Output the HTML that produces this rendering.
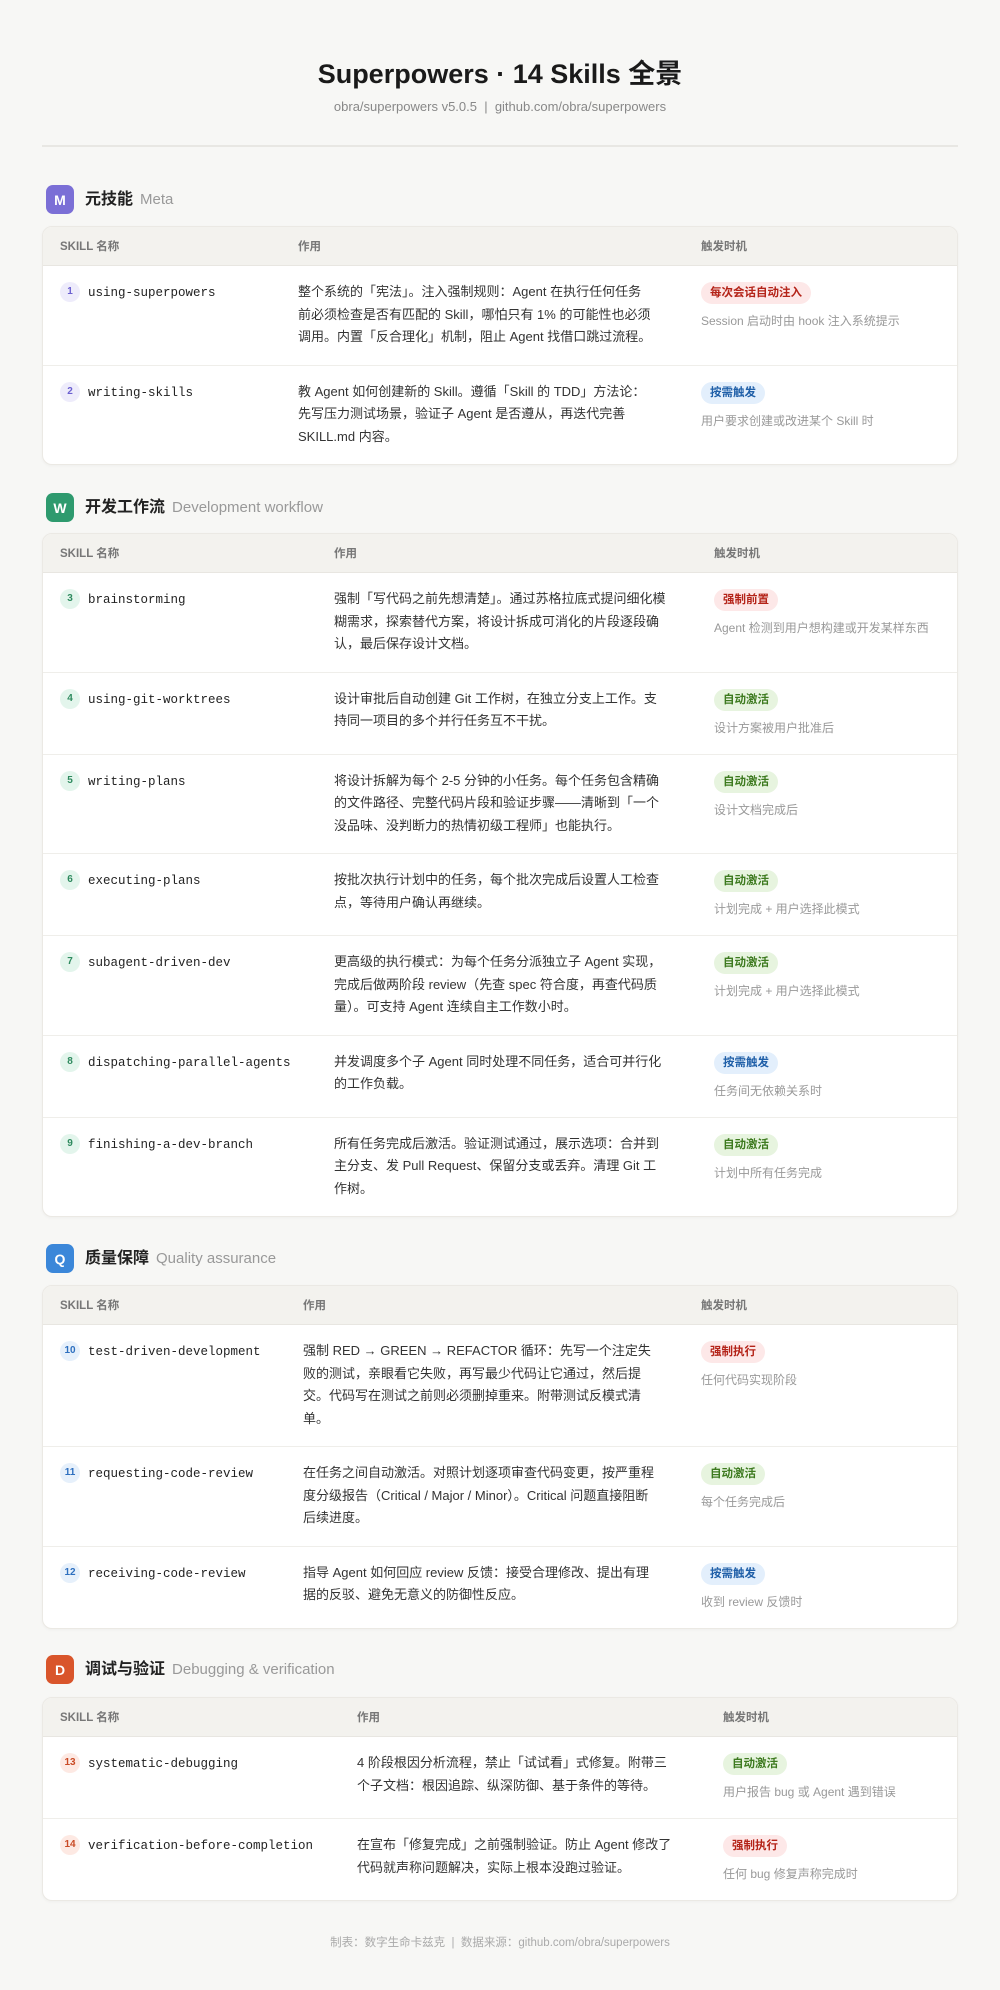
<!DOCTYPE html>
<html><head><meta charset="utf-8"><style>
*{box-sizing:border-box;margin:0;padding:0}
body{width:1000px;height:1990px;background:#f7f7f5;font-family:"Liberation Sans","Noto Sans CJK SC",sans-serif;color:#333;position:relative;overflow:hidden}
h1{position:absolute;top:52px;left:0;width:1000px;text-align:center;font-size:27px;font-weight:700;color:#1a1a1a}
.sub{position:absolute;top:99px;left:0;width:1000px;text-align:center;font-size:13px;color:#888}
.hr{position:absolute;top:145px;left:42px;width:916px;height:2px;background:#e8e7e3}
.sec{position:absolute;left:46px;height:29px;display:flex;align-items:center}
.bd{width:28px;height:29px;border-radius:7px;color:#fff;font-size:14px;font-weight:700;display:flex;align-items:center;justify-content:center}
.st{display:block;height:29px;line-height:29px;font-size:16px;font-weight:700;color:#222;margin-left:11px}
.se{display:block;height:29px;line-height:29px;font-size:15px;color:#999;margin-left:7px}
table{position:absolute;left:42px;width:916px;border-collapse:separate;border-spacing:0;background:#fff;border:1px solid #ebe9e4;border-radius:10px;table-layout:fixed;box-shadow:0 1px 3px rgba(0,0,0,.04);overflow:hidden}
th{background:#f3f2ee;height:39px;text-align:left;font-size:11.5px;font-weight:700;color:#777;padding-left:17px;border-bottom:1px solid #e8e6e1}
td{vertical-align:top;padding:15px 0 16px 17px;border-bottom:1px solid #efeeea;font-size:13px;line-height:22.5px;white-space:nowrap}
tr:last-child td{border-bottom:none}
.n{display:inline-block;width:20px;height:20px;border-radius:50%;font-size:10px;font-weight:700;text-align:center;line-height:20px;vertical-align:top;margin-top:1px;font-family:"Liberation Sans",sans-serif}
.nm{font-family:"Liberation Mono",monospace;font-size:12.5px;color:#222;margin-left:8px}
.tg{display:inline-block;height:22px;line-height:22px;padding:0 9px;border-radius:11px;font-size:11.5px;font-weight:700}
.r{background:#fde8e8;color:#b42318}.g{background:#e7f4df;color:#3d7a1f}.b{background:#e3effc;color:#1f5fa8}
.tx{font-size:12px;color:#999;line-height:20px;margin-top:7px}
.foot{position:absolute;top:1934px;left:0;width:1000px;text-align:center;font-size:11.5px;color:#aaa}
.m .n{background:#eeecfb;color:#6b5fd0}.w .n{background:#e3f5ec;color:#2e8a5e}.q .n{background:#e6f0fb;color:#2d6fbf}.d .n{background:#fde9e3;color:#c94a25}
</style></head><body>
<h1>Superpowers · 14 Skills 全景</h1>
<div class="sub">obra/superpowers v5.0.5 &nbsp;|&nbsp; github.com/obra/superpowers</div>
<div class="hr"></div>

<div class="sec" style="top:185px"><div class="bd" style="background:#7b6fd6">M</div><span class="st">元技能</span><span class="se">Meta</span></div>
<table class="m" style="top:226px">
<colgroup><col style="width:238px"><col style="width:403px"><col></colgroup>
<tr><th>SKILL 名称</th><th>作用</th><th>触发时机</th></tr>
<tr><td><span class="n">1</span><span class="nm">using-superpowers</span></td><td>整个系统的「宪法」。注入强制规则：Agent 在执行任何任务<br>前必须检查是否有匹配的 Skill，哪怕只有 1% 的可能性也必须<br>调用。内置「反合理化」机制，阻止 Agent 找借口跳过流程。</td><td><span class="tg r">每次会话自动注入</span><div class="tx">Session 启动时由 hook 注入系统提示</div></td></tr>
<tr><td><span class="n">2</span><span class="nm">writing-skills</span></td><td>教 Agent 如何创建新的 Skill。遵循「Skill 的 TDD」方法论：<br>先写压力测试场景，验证子 Agent 是否遵从，再迭代完善<br>SKILL.md 内容。</td><td><span class="tg b">按需触发</span><div class="tx">用户要求创建或改进某个 Skill 时</div></td></tr>
</table>

<div class="sec" style="top:493px"><div class="bd" style="background:#2e9a6e">W</div><span class="st">开发工作流</span><span class="se">Development workflow</span></div>
<table class="w" style="top:533px">
<colgroup><col style="width:274px"><col style="width:380px"><col></colgroup>
<tr><th>SKILL 名称</th><th>作用</th><th>触发时机</th></tr>
<tr><td><span class="n">3</span><span class="nm">brainstorming</span></td><td>强制「写代码之前先想清楚」。通过苏格拉底式提问细化模<br>糊需求，探索替代方案，将设计拆成可消化的片段逐段确<br>认，最后保存设计文档。</td><td><span class="tg r">强制前置</span><div class="tx">Agent 检测到用户想构建或开发某样东西</div></td></tr>
<tr><td><span class="n">4</span><span class="nm">using-git-worktrees</span></td><td>设计审批后自动创建 Git 工作树，在独立分支上工作。支<br>持同一项目的多个并行任务互不干扰。</td><td><span class="tg g">自动激活</span><div class="tx">设计方案被用户批准后</div></td></tr>
<tr><td><span class="n">5</span><span class="nm">writing-plans</span></td><td>将设计拆解为每个 2-5 分钟的小任务。每个任务包含精确<br>的文件路径、完整代码片段和验证步骤——清晰到「一个<br>没品味、没判断力的热情初级工程师」也能执行。</td><td><span class="tg g">自动激活</span><div class="tx">设计文档完成后</div></td></tr>
<tr><td><span class="n">6</span><span class="nm">executing-plans</span></td><td>按批次执行计划中的任务，每个批次完成后设置人工检查<br>点，等待用户确认再继续。</td><td><span class="tg g">自动激活</span><div class="tx">计划完成 + 用户选择此模式</div></td></tr>
<tr><td><span class="n">7</span><span class="nm">subagent-driven-dev</span></td><td>更高级的执行模式：为每个任务分派独立子 Agent 实现，<br>完成后做两阶段 review（先查 spec 符合度，再查代码质<br>量）。可支持 Agent 连续自主工作数小时。</td><td><span class="tg g">自动激活</span><div class="tx">计划完成 + 用户选择此模式</div></td></tr>
<tr><td><span class="n">8</span><span class="nm">dispatching-parallel-agents</span></td><td>并发调度多个子 Agent 同时处理不同任务，适合可并行化<br>的工作负载。</td><td><span class="tg b">按需触发</span><div class="tx">任务间无依赖关系时</div></td></tr>
<tr><td><span class="n">9</span><span class="nm">finishing-a-dev-branch</span></td><td>所有任务完成后激活。验证测试通过，展示选项：合并到<br>主分支、发 Pull Request、保留分支或丢弃。清理 Git 工<br>作树。</td><td><span class="tg g">自动激活</span><div class="tx">计划中所有任务完成</div></td></tr>
</table>

<div class="sec" style="top:1244px"><div class="bd" style="background:#3b87d9">Q</div><span class="st">质量保障</span><span class="se">Quality assurance</span></div>
<table class="q" style="top:1285px">
<colgroup><col style="width:243px"><col style="width:398px"><col></colgroup>
<tr><th>SKILL 名称</th><th>作用</th><th>触发时机</th></tr>
<tr><td><span class="n">10</span><span class="nm">test-driven-development</span></td><td>强制 RED → GREEN → REFACTOR 循环：先写一个注定失<br>败的测试，亲眼看它失败，再写最少代码让它通过，然后提<br>交。代码写在测试之前则必须删掉重来。附带测试反模式清<br>单。</td><td><span class="tg r">强制执行</span><div class="tx">任何代码实现阶段</div></td></tr>
<tr><td><span class="n">11</span><span class="nm">requesting-code-review</span></td><td>在任务之间自动激活。对照计划逐项审查代码变更，按严重程<br>度分级报告（Critical / Major / Minor）。Critical 问题直接阻断<br>后续进度。</td><td><span class="tg g">自动激活</span><div class="tx">每个任务完成后</div></td></tr>
<tr><td><span class="n">12</span><span class="nm">receiving-code-review</span></td><td>指导 Agent 如何回应 review 反馈：接受合理修改、提出有理<br>据的反驳、避免无意义的防御性反应。</td><td><span class="tg b">按需触发</span><div class="tx">收到 review 反馈时</div></td></tr>
</table>

<div class="sec" style="top:1655px"><div class="bd" style="background:#d9552b">D</div><span class="st">调试与验证</span><span class="se">Debugging &amp; verification</span></div>
<table class="d" style="top:1697px">
<colgroup><col style="width:297px"><col style="width:366px"><col></colgroup>
<tr><th>SKILL 名称</th><th>作用</th><th>触发时机</th></tr>
<tr><td><span class="n">13</span><span class="nm">systematic-debugging</span></td><td>4 阶段根因分析流程，禁止「试试看」式修复。附带三<br>个子文档：根因追踪、纵深防御、基于条件的等待。</td><td><span class="tg g">自动激活</span><div class="tx">用户报告 bug 或 Agent 遇到错误</div></td></tr>
<tr><td><span class="n">14</span><span class="nm">verification-before-completion</span></td><td>在宣布「修复完成」之前强制验证。防止 Agent 修改了<br>代码就声称问题解决，实际上根本没跑过验证。</td><td><span class="tg r">强制执行</span><div class="tx">任何 bug 修复声称完成时</div></td></tr>
</table>

<div class="foot">制表：数字生命卡兹克 &nbsp;|&nbsp; 数据来源：github.com/obra/superpowers</div>
</body></html>
